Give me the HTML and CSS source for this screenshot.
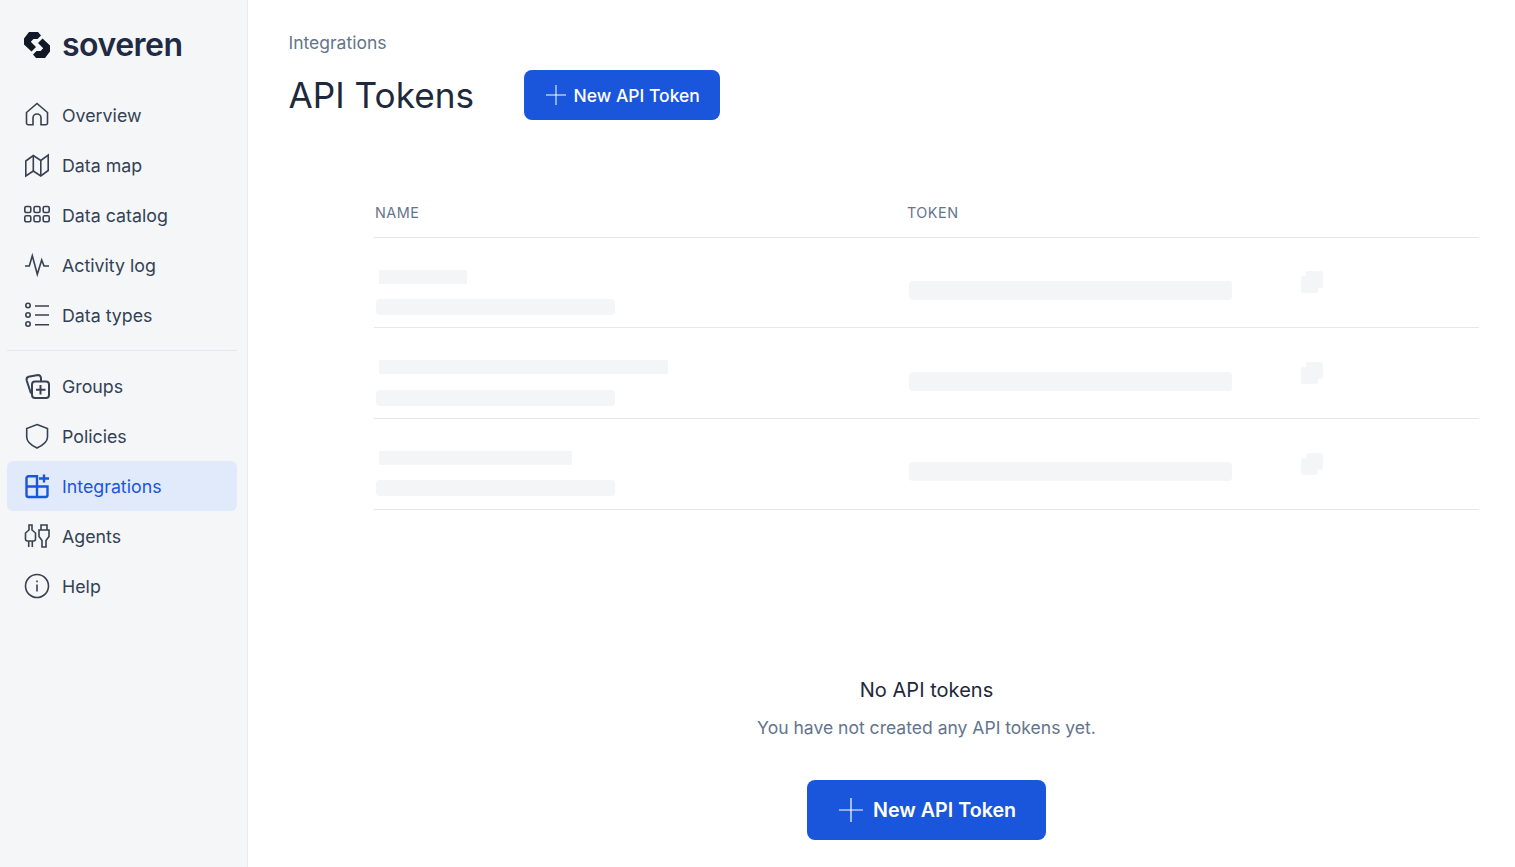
FILE: index.html

```html
<!DOCTYPE html>
<html lang="en">
<head>
  <meta charset="UTF-8" />
  <title>API Tokens | Soveren</title>
  <link rel="stylesheet" href="styles.css">
</head>
<body>

  <aside class="sidebar">
    <div class="brand">
      <svg class="brand-mark" viewBox="0 0 26 26" width="26" height="26" fill="#111827">
        <path d="M5 0h9l3 3.500L13.500 7H9.500L7 9.500v.5l5 5-4.500 4.500L0 12.500v-6z"/>
        <path d="M21 26h-9l-3-3.500 3.500-3.500h4L19 16.500V16l-5-5 4.500-4.500L26 13.500v6z"/>
      </svg>
      <span class="brand-name">soveren</span>
    </div>

    <nav class="nav">
      <a class="nav-item">
        <svg class="icon" viewBox="0 0 24 24"><path d="M1.500 9.500 12 .5l10.500 9V20a1.800 1.800 0 0 1-1.800 1.800H16V15a4 4 0 0 0-8 0v6.800H3.300A1.800 1.800 0 0 1 1.500 20z"/></svg>
        Overview
      </a>
      <a class="nav-item">
        <svg class="icon" viewBox="0 0 24 24"><path d="M.8 8l7.500-5.500 7.500 5 7.400-5.500v15.500L15.800 23l-7.500-5-7.500 5z"/><path d="M8.300 2.500V18M15.800 7.500V23"/></svg>
        Data map
      </a>
      <a class="nav-item">
        <svg class="icon" viewBox="0 0 24 24"><rect x="-0.200" y="3.500" width="6" height="6" rx="1.500"/><rect x="9" y="3.500" width="6" height="6" rx="1.500"/><rect x="18.200" y="3.500" width="6" height="6" rx="1.500"/><rect x="-0.200" y="12.800" width="6" height="6" rx="1.500"/><rect x="9" y="12.800" width="6" height="6" rx="1.500"/><rect x="18.200" y="12.800" width="6" height="6" rx="1.500"/></svg>
        Data catalog
      </a>
      <a class="nav-item">
        <svg class="icon" viewBox="0 0 24 24"><path d="M0 13h4.300l3-10.300 5 18.600L16.700 7l2.300 6h5"/></svg>
        Activity log
      </a>
      <a class="nav-item">
        <svg class="icon" viewBox="0 0 24 24"><circle cx="3" cy="2.500" r="2.200"/><circle cx="3" cy="12" r="2.200"/><circle cx="3" cy="21" r="2.200"/><path d="M10 3h14M10 12h14M10 21.700h14"/></svg>
        Data types
      </a>
    </nav>

    <div class="nav-divider"></div>

    <nav class="nav">
      <a class="nav-item">
        <svg class="icon icon-bold" viewBox="0 0 24 24"><path d="M6 19.500 1.700 6.500Q1 3.500 3.500 2.700L13 1q2.500 0 3 3v3.500"/><rect x="7" y="7.500" width="17" height="16.500" rx="3"/><path d="M15.500 11v9.500M11 15.700h9.500"/></svg>
        Groups
      </a>
      <a class="nav-item">
        <svg class="icon" viewBox="0 0 24 24"><path d="M12 .5l10.500 4V13c0 5.500-5 8.500-10.500 11C6.500 21.500 1.700 18.500 1.700 13V4.500z"/></svg>
        Policies
      </a>
      <a class="nav-item active">
        <svg class="icon" viewBox="0 0 24 24"><path d="M12 2.200H3.500a2 2 0 0 0-2 2V21a2 2 0 0 0 2 2h17a2 2 0 0 0 2-2v-8.500H12zM1.500 12.500H12M12 12.500V23"/><path d="M19 .5v8M14 4.500h10"/></svg>
        Integrations
      </a>
      <a class="nav-item">
        <svg class="icon" viewBox="0 0 24 24"><path d="M4 1h3v5l3.500 3v6a2 2 0 0 1-2 2h-6a2 2 0 0 1-2-2V9L4 6zM3.700 17v6M7.300 17v6"/><path d="M16 6V1h6v5M14 6h10v6.500l-3 4V23h-4v-6.500l-3-4z"/></svg>
        Agents
      </a>
      <a class="nav-item">
        <svg class="icon" viewBox="0 0 24 24"><circle cx="12" cy="12" r="11.500"/><path d="M12 10.500v7M12 6.500v1.700"/></svg>
        Help
      </a>
    </nav>
  </aside>

  <main class="main">
    <div class="breadcrumb">Integrations</div>
    <div class="page-head">
      <h1>API Tokens</h1>
      <button class="btn">
        <svg class="btn-plus" viewBox="0 0 20 20"><path d="M10 0v20M0 10h20"/></svg>
        New API Token
      </button>
    </div>

    <div class="table">
      <div class="table-head">
        <div>NAME</div>
        <div>TOKEN</div>
      </div>

      <div class="row">
        <div class="name-cell">
          <div class="skel skel-title w-short"></div>
          <div class="skel skel-sub"></div>
        </div>
        <div class="skel skel-token"></div>
        <div class="copy"><span class="copy-back"></span><span class="copy-front"></span></div>
      </div>

      <div class="row">
        <div class="name-cell">
          <div class="skel skel-title w-long"></div>
          <div class="skel skel-sub"></div>
        </div>
        <div class="skel skel-token"></div>
        <div class="copy"><span class="copy-back"></span><span class="copy-front"></span></div>
      </div>

      <div class="row">
        <div class="name-cell">
          <div class="skel skel-title w-mid"></div>
          <div class="skel skel-sub"></div>
        </div>
        <div class="skel skel-token"></div>
        <div class="copy"><span class="copy-back"></span><span class="copy-front"></span></div>
      </div>
    </div>

    <div class="empty">
      <h2>No API tokens</h2>
      <p>You have not created any API tokens yet.</p>
      <button class="btn btn-large">
        <svg class="btn-plus" viewBox="0 0 20 20"><path d="M10 0v20M0 10h20"/></svg>
        New API Token
      </button>
    </div>
  </main>

</body>
</html>
```

FILE: styles.css

```css
* {
  box-sizing: border-box;
}
html, body {
  height: 100%;
}
body {
  margin: 0;
  display: flex;
  height: 867px;
  overflow: hidden;
  font-family: Inter, "Liberation Sans", sans-serif;
  background-color: #fff;
  color: #1e293b;
}

/* sidebar */
.sidebar {
  width: 248px;
  flex: none;
  padding: 0 10px 0 7px;
  background-color: #f5f6f8;
  border-right: 1px solid #e9ebf0;
}
.brand {
  display: flex;
  align-items: center;
  height: 90px;
  padding-left: 17px;
}
.brand-mark {
  flex: none;
}
.brand-name {
  margin-left: 12px;
  padding-bottom: 2px;
  font-size: 32px;
  font-weight: 560;
  letter-spacing: -0.5px;
  color: #1f2a44;
}
.nav-item {
  display: flex;
  align-items: center;
  height: 50px;
  padding-left: 18px;
  border-radius: 6px;
  font-size: 17.8px;
  color: #334155;
}
.nav-item.active {
  background-color: #e1eafb;
  color: #1a56db;
}
.icon {
  flex: none;
  width: 24px;
  height: 24px;
  margin-right: 13px;
  overflow: visible;
  fill: none;
  stroke: #374151;
  stroke-width: 1.6;
}
.icon-bold {
  stroke-width: 2;
}
.active .icon {
  stroke: #1a56db;
  stroke-width: 2.4;
}
.nav-divider {
  height: 1px;
  margin: 10px 0;
  background-color: #e5e7eb;
}

/* main */
.main {
  flex: 1;
  padding: 32px 36px 0 40.5px;
}
.breadcrumb {
  font-size: 17.5px;
  line-height: 22px;
  color: #64748b;
}
.page-head {
  display: flex;
  align-items: center;
  gap: 49.5px;
  margin-top: 16px;
}
h1 {
  margin: 0;
  font-size: 35.2px;
  font-weight: 400;
  line-height: 50px;
  color: #1e293b;
}
.btn {
  display: flex;
  align-items: center;
  gap: 8px;
  width: 196px;
  height: 50px;
  padding: 0 0 0 22px;
  border: 0;
  border-radius: 8px;
  background-color: #1a56db;
  color: #fff;
  font-family: inherit;
  font-size: 17.5px;
  font-weight: 500;
}
.btn-plus {
  width: 20px;
  height: 20px;
  fill: none;
  stroke: #fff;
  stroke-width: 1;
}

/* table */
.table {
  margin: 68px 0 0 85.5px;
}
.table-head {
  display: grid;
  grid-template-columns: 532px 1fr;
  height: 49.6px;
  padding-top: 16px;
  padding-left: 1px;
  border-bottom: 1px solid #e5e7eb;
  font-size: 14.4px;
  line-height: 18px;
  letter-spacing: 0.5px;
  color: #64748b;
}
.row {
  display: flex;
  align-items: flex-start;
  height: 90.67px;
  padding-top: 32px;
  border-bottom: 1px solid #e5e7eb;
}
.name-cell {
  width: 242px;
  padding-left: 2px;
}
.skel {
  background-color: #f4f5f7;
}
.skel-title {
  height: 14px;
  margin-left: 3px;
}
.w-short { width: 88px; }
.w-long { width: 289px; }
.w-mid { width: 193px; }
.skel-sub {
  width: 239px;
  height: 16px;
  margin-top: 15.5px;
  border-radius: 4px;
}
.skel-token {
  width: 323px;
  height: 19px;
  margin: 11.5px 0 0 293px;
  border-radius: 4px;
}
.copy {
  position: relative;
  width: 22px;
  height: 22px;
  margin: 1.8px 0 0 69px;
}
.copy span {
  position: absolute;
  width: 17px;
  height: 17px;
  border-radius: 2px;
  background-color: #f4f5f7;
}
.copy-back {
  top: 0;
  left: 5px;
}
.copy-front {
  top: 5px;
  left: 0;
}

/* empty state */
.empty {
  display: flex;
  flex-direction: column;
  align-items: center;
  margin-left: 85.5px;
  padding-top: 168.4px;
}
h2 {
  margin: 0;
  font-size: 20px;
  font-weight: 400;
  line-height: 24px;
  letter-spacing: 0.03px;
  color: #1e293b;
}
.empty p {
  margin: 14px 0 0;
  font-size: 17.55px;
  line-height: 24px;
  color: #64748b;
}
.btn-large {
  width: 239px;
  height: 60px;
  margin-top: 40px;
  padding-left: 32px;
  gap: 10px;
  font-size: 19.7px;
  font-weight: 600;
}
.btn-large .btn-plus {
  width: 24px;
  height: 24px;
}
```
